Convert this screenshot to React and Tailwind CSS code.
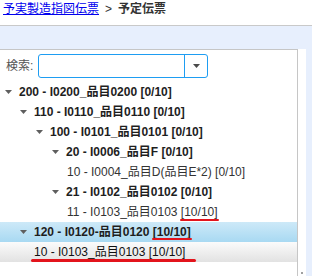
import React from "react";

const rows = [
  { pl: "pl-[5px]", arrow: true, bold: true, text: "200 - I0200_品目0200 [0/10]" },
  { pl: "pl-[20px]", arrow: true, bold: true, text: "110 - I0110_品目0110 [0/10]" },
  { pl: "pl-[36px]", arrow: true, bold: true, text: "100 - I0101_品目0101 [0/10]" },
  { pl: "pl-[52px]", arrow: true, bold: true, text: "20 - I0006_品目F [0/10]" },
  { pl: "pl-[67px]", text: "10 - I0004_品目D(品目E*2) [0/10]" },
  { pl: "pl-[52px]", arrow: true, bold: true, text: "21 - I0102_品目0102 [0/10]" },
  { pl: "pl-[67px]", text: "11 - I0103_品目0103 ", mark: "[10/10]" },
  {
    pl: "pl-[20px]",
    arrow: true,
    bold: true,
    text: "120 - I0120-品目0120 ",
    mark: "[10/10]",
    bg: "bg-gradient-to-b from-[#cde9f8] to-[#a8d9f2]",
  },
];

const Arrow = () => (
  <svg width="7" height="4" viewBox="0 0 7 4" className="mr-[7px] shrink-0">
    <path d="M0 0h7L3.5 4z" fill="#5f5f5f" />
  </svg>
);

const TreeRow = ({ row }) => (
  <div className={`h-[20px] flex items-center ${row.pl} ${row.bg || ""}`}>
    {row.arrow && <Arrow />}
    <span
      className={`whitespace-pre leading-[14px] ${
        row.bold ? "font-bold text-[#1e1e1e]" : "text-[#333333]"
      }`}
    >
      {row.text}
      {row.mark && (
        <span className="relative">
          {row.mark}
          <span
            className={`absolute left-[-1px] right-[-1px] h-[2.5px] rounded-full bg-[#e3141c] ${
              row.bold ? "bottom-[-1px]" : "bottom-[-2px]"
            }`}
          />
        </span>
      )}
    </span>
  </div>
);

export default function App() {
  return (
    <div className="w-[312px] h-[276px] overflow-hidden bg-white text-[12px] font-['Liberation_Sans','Noto_Sans_CJK_JP',sans-serif]">
      <div className="h-[26px] border-b border-[#c9c9c9] pl-[3px] flex items-start leading-[18px]">
        <a href="#" className="text-[#0000ee] underline">
          予実製造指図伝票
        </a>
        <span className="mx-[6px] text-[#333333]">&gt;</span>
        <span className="font-bold text-[#333333]">予定伝票</span>
      </div>

      <div className="h-[250px] bg-[#e7effd] pt-[23px] flex">
        <div className="w-[298px] h-full bg-white border-t border-r border-[#c6c6c6]">
          <div className="pt-[4px] pl-[6px] flex items-center">
            <span className="w-[32px] text-[#555555]">検索:</span>
            <div className="w-[170px] h-[24px] border border-[#1e9df2] rounded-[3px] flex">
              <div className="w-[145px]" />
              <div className="flex-1 border-l border-[#1e9df2] flex items-center justify-center">
                <svg width="7" height="4" viewBox="0 0 7 4">
                  <path d="M0 0h7L3.5 4z" fill="#4a4a4a" />
                </svg>
              </div>
            </div>
          </div>

          <div className="mt-[4px]">
            {rows.map((row, i) => (
              <TreeRow key={i} row={row} />
            ))}
            <div className="h-[20px] flex items-center pl-[34px] bg-gradient-to-b from-[#fbfbfb] to-[#e2e2e2]">
              <span className="relative whitespace-pre leading-[14px] text-[#111111]">
                10 - I0103_品目0103 [10/10]
                <span className="absolute left-[-3px] right-[-11px] bottom-[-3px] h-[3px] rounded-full bg-[#e3141c]" />
              </span>
            </div>
          </div>
        </div>

        <div className="w-[8px] h-full bg-white flex flex-col justify-end items-center pb-[2px]">
          <span className="w-[2px] h-[2px] bg-[#a0a0a0]" />
        </div>
      </div>
    </div>
  );
}
